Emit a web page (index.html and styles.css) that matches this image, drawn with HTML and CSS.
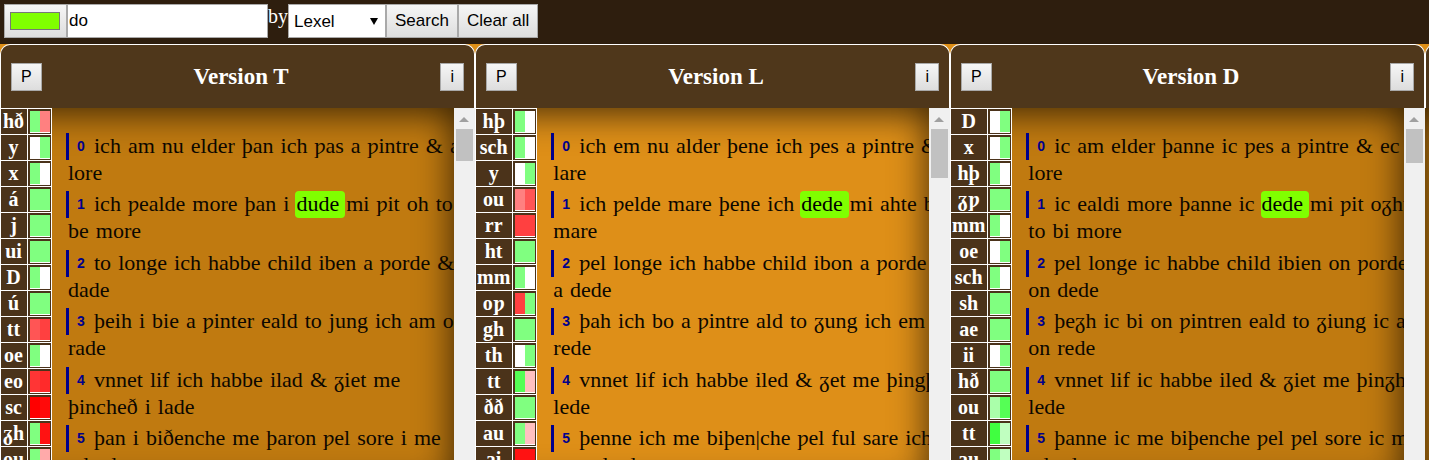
FILE: index.html
```html
<!DOCTYPE html>
<html lang="en">
<head>
<meta charset="utf-8">
<title>Parallel versions</title>
<link rel="stylesheet" href="styles.css">
</head>
<body>
<form class="toolbar">
  <input class="color" type="color" value="#80ff00" aria-label="Highlight colour">
  <input class="query" type="text" value="do" aria-label="Search text">
  <label class="by" for="unit">by</label>
  <span class="pick"><select id="unit"><option>Lexel</option><option>Word</option></select></span>
  <button type="button">Search</button>
  <button type="button">Clear all</button>
</form>
<main class="versions" id="versions"></main>
<script src="script.js"></script>
</body>
</html>
```
FILE: styles.css
```css
* { box-sizing: border-box; }

body {
  margin: 0;
  height: 100vh;
  overflow: hidden;
  display: flex;
  flex-direction: column;
  background: #de8f18;
  font-family: "Liberation Serif", "Times New Roman", serif;
}

.toolbar {
  display: flex;
  padding: 4px 4px 6px;
  background: #2e1e0e;
  color: #fff;
  font-size: 20px;
}

.toolbar input,
.toolbar select,
.toolbar button,
.head button {
  height: 34px;
  margin: 0;
  border: 1px solid #a9a9a9;
  border-radius: 0;
  font: 17px "Liberation Sans", Arial, sans-serif;
  color: #000;
  outline: none;
}

.toolbar button,
.head button,
.toolbar .color {
  background: linear-gradient(#f6f6f6, #dddddd);
}

.toolbar button { padding: 0 8px; }

.toolbar .color {
  appearance: none;
  width: 63px;
  padding: 7px 6px 7px 5px;
}

.color::-webkit-color-swatch-wrapper { padding: 0; }
.color::-webkit-color-swatch { border: 1px solid #777; border-radius: 0; }

.toolbar .query { width: 201px; padding: 0 1px; }

.by { line-height: 24px; width: 20px; }

.pick { position: relative; display: flex; }

.pick::after {
  content: "";
  position: absolute;
  right: 8px;
  top: 14px;
  border: 4px solid transparent;
  border-top: 7px solid #000;
  border-bottom: 0;
}

.toolbar select {
  appearance: none;
  width: 98px;
  padding: 0 5px;
  background: #fff;
}

.versions {
  flex: 1;
  min-height: 0;
  display: flex;
  overflow: hidden;
}

.version {
  flex: 0 0 33.24%;
  min-width: 0;
  display: flex;
  flex-direction: column;
}

.head {
  display: flex;
  align-items: center;
  justify-content: space-between;
  height: 64px;
  padding: 0 10px;
  border: 1px solid #fff;
  border-bottom: 0;
  border-radius: 10px 10px 0 0;
  background: #4f371b;
  color: #fff;
}

.head h2 { margin: 0; font-size: 23px; line-height: 28px; }
.head button { height: 28px; padding: 0 9px; font-size: 16px; }

.body {
  flex: 1;
  min-height: 0;
  display: flex;
  overflow: hidden;
}

.pane {
  flex: 1;
  min-width: 0;
  height: 376px;
  display: flex;
  align-items: flex-start;
  overflow: hidden;
  background: #c07a10;
  box-shadow: inset 0 4px 36px rgba(0, 0, 0, 0.75);
}

.pane.light { background: #de8f18; }

.keys {
  flex: none;
  border-collapse: collapse;
  background: #4b331a;
  color: #fff;
  font-size: 20px;
  font-weight: bold;
  line-height: 25px;
}

.keys td, .keys th {
  height: 26px;
  padding: 0;
  border: 1px solid #fff;
  text-align: center;
}

.keys th { min-width: 27px; padding: 0 2px 0 1px; }
.keys td { width: 24px; }

.swatch {
  display: flex;
  width: 20px;
  height: 22px;
  margin: 0 auto;
  border-bottom: 1px solid #fff;
}

.swatch span { flex: 1; }

.verses {
  margin: 0;
  padding: 25px 0 0 14px;
  list-style: none;
  font-size: 22px;
  line-height: 25px;
  white-space: nowrap;
  color: #0c0700;
}

.verses li { margin-bottom: 4px; }
.verses li:nth-child(even) { margin-bottom: 5px; }
.verses div { display: flex; }
.verses div + div { padding-left: 1px; }

.num {
  width: 27px;
  padding-left: 8px;
  border-left: 3px solid #00008b;
  color: #00008b;
  font: bold 14px/27px "Liberation Sans", Arial, sans-serif;
}

.word { padding: 0 6px 2px 1px; }
.word.hit { border-radius: 4px; background: #80ff00; color: #000; }

.scroll {
  flex: none;
  width: 21px;
  padding: 9px 2px 0;
  background: #f0f0f0;
}

.scroll::before {
  content: "";
  display: block;
  width: 0;
  margin: 0 auto 7px;
  border: 5px solid transparent;
  border-top: 0;
  border-bottom-color: #a0a0a0;
}

.thumb { background: #c1c1c1; }
```
FILE: script.js
```js
const G = "#80ff80", W = "#ffffff";

const versions = [
  {
    name: "T", thumb: 32,
    keys: [["hð", G, "#ff8080"], ["y", W, G], ["x", G, W], ["á", G, G], ["j", G, G], ["ui", G, G],
      ["D", G, W], ["ú", G, G], ["tt", "#ff5555", "#ff4040"], ["oe", G, W], ["eo", "#ff3535", "#ff2a2a"],
      ["sc", "#ff0000", "#ff0a0a"], ["ᵹh", G, "#ff1212"], ["ou", G, "#ffaaaa"]],
    verses: [
      ["ich am nu elder þan ich ƿas a ƿintre & a", "lore"],
      ["ich ƿealde more þan i *dude mi ƿit oh to", "be more"],
      ["to longe ich habbe child iben a ƿorde &", "dade"],
      ["þeih i bie a ƿinter eald to jung ich am o", "rade"],
      ["vnnet lif ich habbe ilad & ᵹiet me", "þincheð i lade"],
      ["þan i biðenche me þaron ƿel sore i me", "adrede"]
    ]
  },
  {
    name: "L", thumb: 49, light: true,
    keys: [["hþ", G, W], ["sch", G, W], ["y", W, G], ["ou", "#ff8080", "#ff5555"], ["rr", "#ff4040", "#ff4040"],
      ["ht", G, G], ["mm", G, W], ["oƿ", "#ff4040", G], ["gh", G, G], ["th", W, G],
      ["tt", "#55ff55", "#ffc0c0"], ["ðð", G, G], ["au", G, "#ffc0c0"], ["ai", "#ff1212", "#ff1212"]],
    verses: [
      ["ich em nu alder þene ich ƿes a ƿintre &", "lare"],
      ["ich ƿelde mare þene ich *dede mi ahte b", "mare"],
      ["ƿel longe ich habbe child ibon a ƿorde", "a dede"],
      ["þah ich bo a ƿintre ald to ᵹung ich em", "rede"],
      ["vnnet lif ich habbe iled & ᵹet me þingþ", "lede"],
      ["þenne ich me biþen|che ƿel ful sare ich", "me adrede"]
    ]
  },
  {
    name: "D", thumb: 34,
    keys: [["D", W, G], ["x", W, G], ["hþ", G, W], ["ᵹƿ", G, G], ["mm", G, W], ["oe", W, G],
      ["sch", G, W], ["sh", G, G], ["ae", G, G], ["ii", W, G], ["hð", G, G],
      ["ou", "#aaffaa", "#55ff55"], ["tt", "#40ff40", "#c0ffc0"], ["au", G, "#c0ffc0"]],
    verses: [
      ["ic am elder þanne ic ƿes a ƿintre & ec", "lore"],
      ["ic ealdi more þanne ic *dede mi ƿit oᵹht", "to bi more"],
      ["ƿel longe ic habbe child ibien on ƿorde", "on dede"],
      ["þeᵹh ic bi on ƿintren eald to ᵹiung ic a", "on rede"],
      ["vnnet lif ic habbe iled & ᵹiet me þinᵹh", "lede"],
      ["þanne ic me biþenche ƿel ƿel sore ic m", "adrede"]
    ]
  }
];

const words = line => line.split(" ").map(w =>
  w[0] === "*" ? `<span class="word hit">${w.slice(1)}</span>`
               : `<span class="word">${w.replace("&", "&amp;")}</span>`).join(" ");

const column = v => `
<section class="version">
  <header class="head"><button type="button">P</button><h2>Version ${v.name}</h2><button type="button">i</button></header>
  <div class="body">
    <div class="pane${v.light ? " light" : ""}">
      <table class="keys">${v.keys.map(([k, a, b]) => `<tr><th scope="row">${k}</th>
        <td><div class="swatch"><span style="background:${a}"></span><span style="background:${b}"></span></div></td></tr>`).join("")}</table>
      <ol class="verses">${v.verses.map(([a, b], i) =>
        `<li><div><span class="num">${i}</span>${words(a)}</div><div>${words(b)}</div></li>`).join("")}</ol>
    </div>
    <div class="scroll"><div class="thumb" style="height:${v.thumb}px"></div></div>
  </div>
</section>`;

document.getElementById("versions").innerHTML = versions.map(column).join("") +
  `<section class="version"><header class="head"></header><div class="body"><div class="pane"></div></div></section>`;
```
